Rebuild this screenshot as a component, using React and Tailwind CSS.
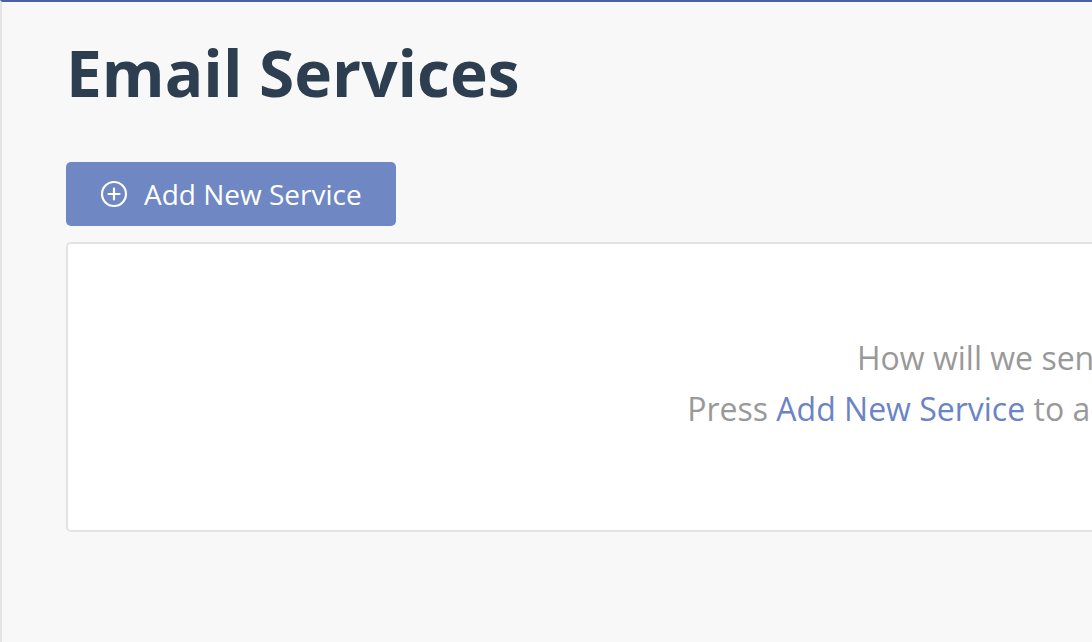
import React from 'react'

function PlusCircle({ className }) {
  return (
    <svg viewBox="0 0 28 28" className={className} fill="none" stroke="currentColor" strokeWidth="2.2" strokeLinecap="round">
      <circle cx="14" cy="14" r="12" />
      <path d="M14 8.5v11M8.5 14h11" />
    </svg>
  )
}

export default function App() {
  return (
    <div
      className="h-[642px] w-full overflow-hidden border-t-2 border-l-2 border-t-[#4a61a8] border-l-[#e4e4e4] bg-[#f8f8f8]"
      style={{ fontFamily: '"Open Sans", sans-serif' }}
    >
      <div className="pl-[64px] pt-[29px]">
        <h1 className="text-[64px] font-bold leading-[84px] text-[#2c3e50]">Email Services</h1>

        <button className="mt-[47px] flex h-[64px] w-[330px] items-center gap-[16px] rounded-[5px] bg-[#6f87c3] pl-[34px] text-[28px] text-white">
          <PlusCircle className="h-[28px] w-[28px]" />
          <span>Add New Service</span>
        </button>

        <div className="mt-[16px] flex h-[290px] w-[2034px] flex-col items-center justify-center rounded-[5px] border-2 border-[#e3e3e3] bg-white pb-[9px] text-[32px] leading-[51px] text-[#999999]">
          <p>How will we send your emails?</p>
          <p className="pl-[4px]">
            Press <span className="text-[#6b84c3]">Add New Service</span> to add your first email service.
          </p>
        </div>
      </div>
    </div>
  )
}
